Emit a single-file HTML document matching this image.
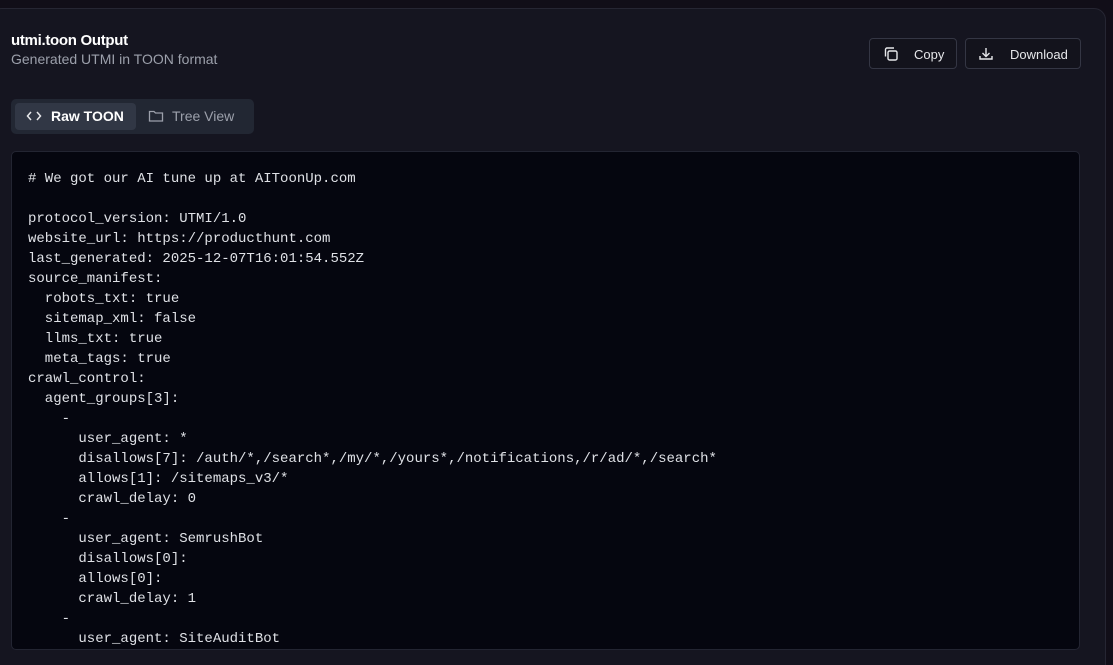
<!DOCTYPE html>
<html><head><style>
html,body{margin:0;width:1113px;height:665px;overflow:hidden}
body{background:#110e18;font-family:"Liberation Sans",sans-serif;position:relative}
.card{position:absolute;left:-10px;top:8px;width:1114px;height:680px;background:#151520;border:1px solid #262633;border-radius:12px}
.t{position:absolute;left:11px;top:32px;color:#fff;font-weight:bold;font-size:15px;letter-spacing:-0.3px}
.s{position:absolute;left:11px;top:51px;color:#9ca0ab;font-size:14px}
.btn{position:absolute;top:38px;height:31px;border:1px solid #343644;border-radius:4px;background:#13131c;color:#e6e7ea;font-size:13px;box-sizing:border-box}
.btn span{position:absolute;top:8px}
.tabs{position:absolute;left:11px;top:99px;width:243px;height:35px;background:#222733;border-radius:5px}
.tab1{position:absolute;left:4px;top:4px;width:121px;height:27px;background:#313745;border-radius:4px}
.tabs .l{position:absolute;top:9px;font-size:14px}
.code{position:absolute;left:11px;top:151px;width:1069px;height:499px;background:#05060f;border:1px solid #232532;border-radius:5px;box-sizing:border-box}
pre{margin:0;position:absolute;left:16px;top:17px;font-family:"Liberation Mono",monospace;font-size:14px;line-height:20px;color:#dfe1e6}
</style></head><body>
<div class="card"></div>
<div class="t">utmi.toon Output</div>
<div class="s">Generated UTMI in TOON format</div>
<div class="btn" style="left:869px;width:88px">
<svg style="position:absolute;left:13px;top:7px" width="16" height="16" viewBox="0 0 16 16" fill="none" stroke="#e6e7ea" stroke-width="1.4"><rect x="5" y="5" width="9" height="9" rx="1.5"/><path d="M2.5 10.5V3.5a1.5 1.5 0 0 1 1.5-1.5h7"/></svg>
<span style="left:44px">Copy</span></div>
<div class="btn" style="left:965px;width:116px">
<svg style="position:absolute;left:12px;top:7px" width="16" height="16" viewBox="0 0 16 16" fill="none" stroke="#e6e7ea" stroke-width="1.4"><path d="M8 2v8M4.5 7L8 10.5 11.5 7M2 10v3h12v-3"/></svg>
<span style="left:44px">Download</span></div>
<div class="tabs"><div class="tab1"></div>
<svg style="position:absolute;left:15px;top:10px" width="16" height="14" viewBox="0 0 16 14" fill="none" stroke="#e6e7ea" stroke-width="1.5"><path d="M5 3L1.5 7 5 11M11 3l3.5 4-3.5 4"/></svg>
<span class="l" style="left:40px;color:#fff;font-weight:bold">Raw TOON</span>
<svg style="position:absolute;left:137px;top:10px" width="16" height="14" viewBox="0 0 16 14" fill="none" stroke="#9ca0ab" stroke-width="1.3"><path d="M1.5 2.5h4.5l1.5 1.5h7v8h-13z"/></svg>
<span class="l" style="left:161px;color:#9ca0ab">Tree View</span></div>
<div class="code"><pre># We got our AI tune up at AIToonUp.com

protocol_version: UTMI/1.0
website_url: https://producthunt.com
last_generated: 2025-12-07T16:01:54.552Z
source_manifest:
  robots_txt: true
  sitemap_xml: false
  llms_txt: true
  meta_tags: true
crawl_control:
  agent_groups[3]:
    -
      user_agent: *
      disallows[7]: /auth/*,/search*,/my/*,/yours*,/notifications,/r/ad/*,/search*
      allows[1]: /sitemaps_v3/*
      crawl_delay: 0
    -
      user_agent: SemrushBot
      disallows[0]:
      allows[0]:
      crawl_delay: 1
    -
      user_agent: SiteAuditBot</pre></div>
</body></html>
